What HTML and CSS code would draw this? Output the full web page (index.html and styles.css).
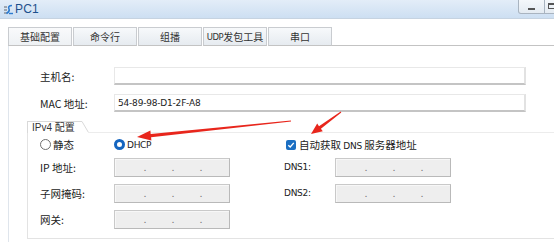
FILE: index.html
```html
<!DOCTYPE html>
<html lang="zh">
<head>
<meta charset="utf-8">
<link rel="stylesheet" href="styles.css">
</head>
<body>
<div class="window">
  <div class="titlebar">
    <svg class="app-icon" width="11" height="11" viewBox="0 0 11 11">
      <path d="M1 3 H4 M1 6 H4 M1 9 H4" stroke="#8a9099" stroke-width="1.4"/>
      <path d="M9 1.5 C6 1.5 5 3 6 5 C7 7 5 8.5 3.5 9.5" stroke="#2c7bd0" stroke-width="1.6" fill="none"/>
      <path d="M6 9.5 H10" stroke="#2c7bd0" stroke-width="1.4"/>
    </svg>
    <span class="title">PC1</span>
    <div class="win-buttons">
      <div class="win-btn min"><span></span></div>
      <div class="win-btn max"><span></span></div>
    </div>
  </div>

  <div class="body">
    <div class="tabs">
      <div class="tab active">基础配置</div>
      <div class="tab">命令行</div>
      <div class="tab">组播</div>
      <div class="tab"><span class="tab-latin">UDP</span>发包工具</div>
      <div class="tab">串口</div>
      <div class="tab-fill"></div>
    </div>

    <div class="panel">
      <div class="form-row first">
        <label class="lbl">主机名:</label>
        <div class="field wide"></div>
      </div>
      <div class="form-row">
        <label class="lbl">MAC 地址:</label>
        <div class="field wide">54-89-98-D1-2F-A8</div>
      </div>

      <div class="group">
        <div class="group-head">
          <div class="group-tab">IPv4 配置</div>
          <svg class="group-slant" width="8" height="12" viewBox="0 0 8 12"><path d="M0 0.5 H1 L7.5 11.5" stroke="#d9d9d9" fill="none"/></svg>
          <div class="group-line"></div>
        </div>
        <div class="group-body">
          <div class="opt c1"><span class="radio"></span><span>静态</span></div>
          <div class="opt c2"><span class="radio on"></span><span class="latin">DHCP</span></div>
          <div class="opt c4"><span class="check"><svg width="8" height="8" viewBox="0 0 8 8"><path d="M1.3 4.2 L3.2 6 L6.8 1.8" stroke="#fff" stroke-width="1.3" fill="none"/></svg></span><span class="opt-text">自动获取 <span class="latin">DNS</span> 服务器地址</span></div>

          <label class="lbl c1">IP 地址:</label>
          <div class="ip c2"><i>.</i><i>.</i><i>.</i></div>
          <label class="lbl latin c4">DNS1:</label>
          <div class="ip c5"><i>.</i><i>.</i><i>.</i></div>

          <label class="lbl c1">子网掩码:</label>
          <div class="ip c2"><i>.</i><i>.</i><i>.</i></div>
          <label class="lbl latin c4">DNS2:</label>
          <div class="ip c5"><i>.</i><i>.</i><i>.</i></div>

          <label class="lbl c1">网关:</label>
          <div class="ip c2"><i>.</i><i>.</i><i>.</i></div>
        </div>
      </div>
    </div>
  </div>

  <svg class="arrows" width="554" height="242" viewBox="0 0 554 242">
    <polygon fill="#e8261c" points="137,137 151.4,140.6 151.1,137.3 291.1,121.5 290.9,120.5 150.7,134 150.4,130.5"/>
    <polygon fill="#e8261c" points="311,134 322.8,131.2 320.9,128.7 341.3,112.4 340.7,111.6 319,126.3 317.2,123.6"/>
  </svg>
</div>
</body>
</html>
```

FILE: styles.css
```css
* { box-sizing: border-box; }
html, body {
  margin: 0;
  padding: 0;
  width: 554px;
  height: 242px;
  overflow: hidden;
  background: #ffffff;
}
body {
  font-family: "Noto Sans CJK SC", "DejaVu Sans", sans-serif;
  font-size: 10.5px;
  color: #222;
}
.window {
  position: relative;
  width: 554px;
  height: 242px;
}
.titlebar {
  height: 19px;
  display: flex;
  align-items: center;
  background: linear-gradient(#e3edf8, #cddff2);
  border-bottom: 1px solid #c6d3e1;
  padding-left: 3px;
}
.app-icon { flex: none; display: block; }
.title {
  margin-left: 1px;
  font-family: "Liberation Sans", "DejaVu Sans", sans-serif;
  font-size: 12px;
  color: #1c4f8c;
  letter-spacing: 0.2px;
}
.win-buttons {
  margin-left: auto;
  align-self: flex-start;
  display: flex;
  margin-top: -1px;
  margin-right: -12px;
}
.win-btn {
  height: 15px;
  border: 1px solid #a9b4c0;
  border-top: none;
  background: linear-gradient(#f5f8fb, #e4ebf2);
  display: flex;
  align-items: center;
  justify-content: center;
}
.win-btn.min { width: 27px; border-radius: 0 0 0 3px; }
.win-btn.min span { width: 7px; height: 2px; background: #555; margin-top: 5px; }
.win-btn.max { width: 21px; border-left: none; }
.win-btn.max span { width: 7px; height: 6px; border: 1px solid #555; border-top-width: 2px; margin-left: -8px; }

.body {
  padding: 8px 0 0 8px;
}
.tabs {
  display: flex;
  height: 19px;
  align-items: stretch;
}
.tab {
  width: 64px;
  margin-right: 1px;
  border: 1px solid #c9ccd0;
  border-bottom: 1px solid #c3c3c3;
  background: linear-gradient(#f7f9fb, #e6ebf0);
  display: flex;
  align-items: center;
  justify-content: center;
  color: #333;
  font-size: 10px;
  white-space: nowrap;
}
.tab-latin {
  font-family: "DejaVu Sans", sans-serif;
  font-size: 8.5px;
  letter-spacing: -0.4px;
}
.tab.active { background: linear-gradient(#f9fafb, #eef1f4); }
.tab-fill {
  flex: 1;
  border-bottom: 1px solid #c3c3c3;
  margin-left: -1px;
}
.panel {
  border-left: 1px solid #dfe5ec;
  height: 200px;
  padding: 21px 0 0 31px;
}
.form-row {
  display: flex;
  align-items: center;
  height: 18px;
  margin-bottom: 9px;
}
.lbl {
  color: #222;
  font-size: 10.5px;
}
.form-row .lbl { width: 74px; }
.field {
  height: 18px;
  border: 1px solid #e8e8e8;
  border-bottom: 2px solid #c4c4c4;
  border-right: 2px solid #e2e2e2;
  background: #fff;
  padding-left: 3px;
  display: flex;
  align-items: center;
  font-family: "DejaVu Sans", sans-serif;
  font-size: 9px;
  letter-spacing: -0.2px;
  color: #222;
}
.field.wide { width: 412px; }

.group {
  margin-left: -13px;
  margin-top: 1px;
}
.group-head {
  display: flex;
  height: 12px;
  align-items: flex-start;
}
.group-tab {
  width: 55px;
  height: 12px;
  border-top: 1px solid #d9d9d9;
  border-left: 1px solid #d9d9d9;
  padding-left: 4px;
  font-size: 10px;
  line-height: 11px;
  color: #333;
  white-space: nowrap;
  font-family: "Liberation Sans", "Noto Sans CJK SC", sans-serif;
}
.group-slant { flex: none; margin-left: -1px; }
.group-line {
  flex: 1;
  align-self: flex-end;
  border-bottom: 1px solid #ececec;
}
.group-body {
  border-left: 1px solid #e3e3e3;
  border-bottom: 1px solid #e3e3e3;
  height: 106px;
  padding: 6px 0 0 12px;
  display: grid;
  grid-template-columns: 74px 116px 55px 50px 116px;
  grid-template-rows: 11px 18px 18px 18px;
  row-gap: 8px;
  align-content: start;
  align-items: center;
}
.c1 { grid-column: 1; }
.c2 { grid-column: 2; }
.c4 { grid-column: 4 / span 2; }
.c5 { grid-column: 5; }
.group-body label.c4 { grid-column: 4; margin-left: -1px; }
.opt {
  display: flex;
  align-items: center;
  font-size: 10.5px;
  color: #222;
  white-space: nowrap;
}
.opt-text { white-space: pre; }
.opt.c4 { margin-left: 1px; }
.latin {
  font-family: "DejaVu Sans", sans-serif;
  font-size: 9px;
  letter-spacing: -0.3px;
}
.lbl.latin { font-size: 9px; }
.radio {
  width: 11px;
  height: 11px;
  border-radius: 50%;
  border: 1px solid #6f6f6f;
  background: #fff;
  margin-right: 2px;
  flex: none;
}
.radio.on {
  border: 3px solid #1565c0;
}
.check {
  width: 10px;
  height: 10px;
  border-radius: 2px;
  background: #1b6ec2;
  margin-right: 3px;
  display: flex;
  align-items: center;
  justify-content: center;
  flex: none;
}
.check svg { display: block; }
.ip {
  height: 19px;
  border: 1px solid #b9b9b9;
  border-top-color: #c9c9c9;
  border-left-color: #c9c9c9;
  background: #eeeeee;
  box-shadow: inset 1px 1px 0 #f7f7f7;
  display: grid;
  grid-template-columns: 28px 28px 28px;
  padding-left: 16px;
  align-items: center;
}
.ip i {
  font-style: normal;
  color: #777;
  font-size: 9px;
  text-align: center;
  line-height: 1;
}
.arrows {
  position: absolute;
  left: 0;
  top: 0;
  pointer-events: none;
}
```
